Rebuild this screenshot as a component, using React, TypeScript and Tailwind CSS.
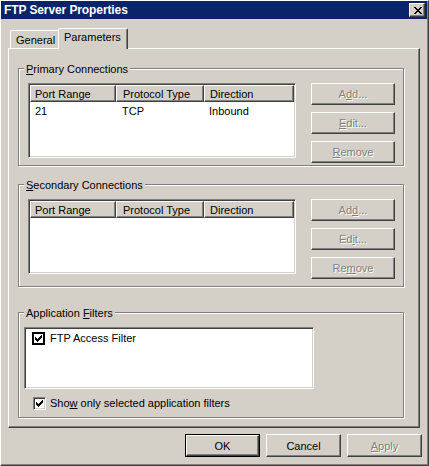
import React from "react";

const raised =
  "border border-t-white border-l-white border-r-[#404040] border-b-[#404040] shadow-[inset_-1px_-1px_0_#808080]";
const sunken =
  "border border-t-[#808080] border-l-[#808080] border-r-white border-b-white shadow-[inset_1px_1px_0_#404040,inset_-1px_-1px_0_#d4d0c8] p-[1px]";
const etched =
  "relative border border-[#808080] shadow-[inset_1px_1px_0_#ffffff,1px_1px_0_#ffffff]";

function Check() {
  return (
    <svg width="7" height="7" viewBox="0 0 7 7" shapeRendering="crispEdges" className="block shrink-0">
      <path
        d="M6 0h1v1h-1z M5 1h2v1h-2z M0 2h1v1h-1z M4 2h3v1h-3z M0 3h2v1h-2z M3 3h3v1h-3z M0 4h5v1h-5z M1 5h3v1h-3z M2 6h1v1h-1z"
        fill="#000"
      />
    </svg>
  );
}

function CloseGlyph() {
  return (
    <svg width="8" height="7" viewBox="0 0 8 7" shapeRendering="crispEdges" className="block shrink-0">
      <path
        d="M0 0h2v1h-2z M6 0h2v1h-2z M1 1h2v1h-2z M5 1h2v1h-2z M2 2h4v1h-4z M3 3h2v1h-2z M2 4h4v1h-4z M1 5h2v1h-2z M5 5h2v1h-2z M0 6h2v1h-2z M6 6h2v1h-2z"
        fill="#000"
      />
    </svg>
  );
}

function DisabledButton({ children }: { children: React.ReactNode }) {
  return (
    <div
      className={`${raised} w-[84px] h-[22px] flex items-center justify-center pt-[1px] text-[#808080] [text-shadow:1px_1px_0_#ffffff] leading-[13px]`}
    >
      <span>{children}</span>
    </div>
  );
}

function ListView({ rows }: { rows: string[][] }) {
  const headers = ["Port Range", "Protocol Type", "Direction"];
  return (
    <div className={`${sunken} w-[268px] h-[75px] bg-white`}>
      <div className="flex h-[17px]">
        <div className={`${raised} w-[86px] h-[17px] bg-[#d4d0c8] pl-[4px] leading-[16px]`}>{headers[0]}</div>
        <div className={`${raised} w-[88px] h-[17px] bg-[#d4d0c8] pl-[6px] leading-[16px]`}>{headers[1]}</div>
        <div className={`${raised} flex-1 h-[17px] bg-[#d4d0c8] pl-[5px] leading-[16px]`}>{headers[2]}</div>
      </div>
      {rows.map((r, i) => (
        <div key={i} className="flex h-[17px] items-center pt-[2px] leading-[13px]">
          <div className="w-[86px] pl-[5px]">{r[0]}</div>
          <div className="w-[88px] pl-[6px]">{r[1]}</div>
          <div className="flex-1 pl-[5px]">{r[2]}</div>
        </div>
      ))}
    </div>
  );
}

function GroupLabel({ children }: { children: React.ReactNode }) {
  return (
    <div className="absolute left-[5px] -top-[7px] px-[2px] bg-[#d4d0c8] leading-[15px]">{children}</div>
  );
}

function ConnGroup({
  title,
  rows,
  btns,
  extra,
}: {
  title: React.ReactNode;
  rows: string[][];
  btns: React.ReactNode[];
  extra: string;
}) {
  return (
    <div className={`${etched} w-[386px] ${extra} pl-[9px] pt-[14px]`}>
      <GroupLabel>{title}</GroupLabel>
      <div className="flex items-start">
        <ListView rows={rows} />
        <div className="ml-[15px] flex flex-col gap-[7px]">
          {btns.map((b, i) => (
            <DisabledButton key={i}>{b}</DisabledButton>
          ))}
        </div>
      </div>
    </div>
  );
}

export default function App() {
  return (
    <div
      className={`w-[429px] h-[466px] bg-[#d4d0c8] border border-t-white border-l-white border-r-[#404040] border-b-[#404040] shadow-[inset_-1px_-1px_0_#808080] pr-[1px] pb-[1px] flex flex-col text-[11px] text-black font-['Liberation_Sans',Arial,sans-serif] select-none`}
    >
      {/* Title bar */}
      <div className="h-[18px] bg-[#0a246a] flex items-center justify-between pl-[3px] pr-[2px]">
        <span className="text-white font-bold text-[12px] leading-[14px] tracking-[-0.1px]">FTP Server Properties</span>
        <div className={`${raised} bg-[#d4d0c8] w-[16px] h-[14px] flex items-center justify-center pl-[1px]`}>
          <CloseGlyph />
        </div>
      </div>

      {/* Tabs */}
      <div className="mt-[9px] ml-[9px] h-[20px] flex items-end">
        <div className="w-[49px] h-[18px] border-l border-t border-white rounded-tl-[2px] pl-[5px] pt-[3px] leading-[13px]">
          General
        </div>
        <div className="relative z-10 -ml-[1px] -mb-[1px] w-[70px] h-[21px] bg-[#d4d0c8] border-l border-t border-white border-r border-r-[#404040] rounded-tl-[2px] rounded-tr-[2px] shadow-[inset_-1px_0_0_#808080] pl-[5px] pt-[2px] leading-[13px]">
          Parameters
        </div>
      </div>

      {/* Panel */}
      <div className={`ml-[7px] w-[412px] h-[380px] ${raised} pl-[9px] pt-[19px] flex flex-col`}>
        <ConnGroup
          title={
            <>
              <span className="underline">P</span>rimary Connections
            </>
          }
          rows={[["21", "TCP", "Inbound"]]}
          extra="h-[98px]"
          btns={[
            <>
              A<span className="underline">d</span>d...
            </>,
            <>
              <span className="underline">E</span>dit...
            </>,
            <>
              <span className="underline">R</span>emove
            </>,
          ]}
        />
        <div className="h-[18px]" />
        <ConnGroup
          title={
            <>
              <span className="underline">S</span>econdary Connections
            </>
          }
          rows={[]}
          extra="h-[103px]"
          btns={[
            <>
              Ad<span className="underline">d</span>...
            </>,
            <>
              Ed<span className="underline">i</span>t...
            </>,
            <>
              Re<span className="underline">m</span>ove
            </>,
          ]}
        />
        <div className="h-[25px]" />
        <div className={`${etched} w-[386px] h-[106px] pl-[5px] pt-[14px]`}>
          <GroupLabel>
            Application <span className="underline">F</span>ilters
          </GroupLabel>
          <div className={`${sunken} w-[290px] h-[62px] bg-white pl-[7px] pt-[4px]`}>
            <div className="flex items-center">
              <div className="w-[13px] h-[13px] border-2 border-black bg-white flex items-center justify-center">
                <Check />
              </div>
              <span className="ml-[5px] leading-[13px]">FTP Access Filter</span>
            </div>
          </div>
          <div className="mt-[8px] ml-[9px] flex items-center">
            <div className="w-[13px] h-[13px] border border-t-[#808080] border-l-[#808080] border-r-white border-b-white shadow-[inset_1px_1px_0_#404040,inset_-1px_-1px_0_#d4d0c8] bg-white flex items-center justify-center">
              <Check />
            </div>
            <span className="ml-[4px] leading-[13px]">
              Sho<span className="underline">w</span> only selected application filters
            </span>
          </div>
        </div>
      </div>

      {/* Bottom buttons */}
      <div className="mt-[6px] flex justify-end gap-[6px] pr-[5px]">
        <div className="w-[75px] h-[23px] border border-black">
          <div className={`${raised} w-full h-full flex items-center justify-center pt-[1px] leading-[13px]`}>OK</div>
        </div>
        <div className={`${raised} w-[75px] h-[23px] flex items-center justify-center pt-[1px] leading-[13px]`}>Cancel</div>
        <div
          className={`${raised} w-[75px] h-[23px] flex items-center justify-center pt-[1px] leading-[13px] text-[#808080] [text-shadow:1px_1px_0_#ffffff]`}
        >
          <span>
            <span className="underline">A</span>pply
          </span>
        </div>
      </div>
    </div>
  );
}
